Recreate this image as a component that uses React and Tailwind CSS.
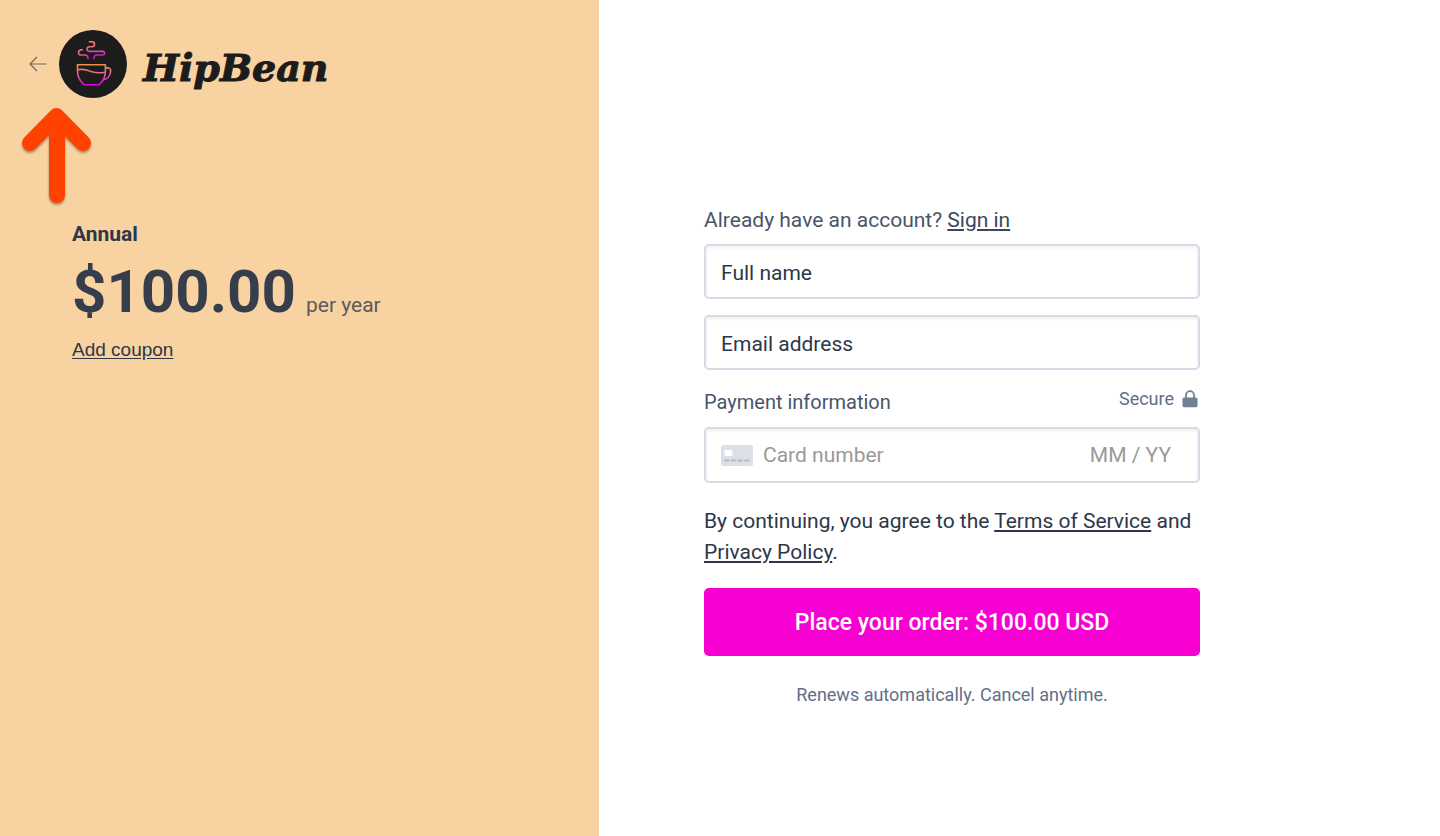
import React from "react";

function LogoMark() {
  return (
    <svg viewBox="0 0 68 68" className="w-[68px] h-[68px]" fill="none" aria-hidden="true">
      <defs>
        <linearGradient id="steam" gradientUnits="userSpaceOnUse" x1="0" y1="11" x2="0" y2="28">
          <stop offset="0" stopColor="#f09050" />
          <stop offset="0.45" stopColor="#e2608a" />
          <stop offset="0.8" stopColor="#d61fc8" />
          <stop offset="1" stopColor="#d800dc" />
        </linearGradient>
        <linearGradient id="steam-left" gradientUnits="userSpaceOnUse" x1="0" y1="19" x2="0" y2="29">
          <stop offset="0" stopColor="#f09050" />
          <stop offset="0.5" stopColor="#e2608a" />
          <stop offset="1" stopColor="#d800dc" />
        </linearGradient>
        <linearGradient id="cup" gradientUnits="userSpaceOnUse" x1="0" y1="34" x2="0" y2="55">
          <stop offset="0" stopColor="#ee9448" />
          <stop offset="0.5" stopColor="#e0609a" />
          <stop offset="1" stopColor="#e000e0" />
        </linearGradient>
      </defs>
      <circle cx="34" cy="34" r="34" fill="#1c1c1c" />
      <g strokeWidth="1.6" strokeLinecap="round">
        <path
          stroke="url(#steam)"
          d="M30.4 11.7h2.6a2.5 2.5 0 0 1 0 5h-2.6a2.3 2.3 0 0 0 0 4.7h13.4a1.8 1.8 0 0 1 0 3.6H38c-2.3 0-3.2 1.5-3.2 3.8"
        />
        <path
          stroke="url(#steam-left)"
          d="M23.2 19.7c-2.2 0-3.7 1.4-3.7 3 0 1.4 1 2.3 2.4 2.3h3.8c2.3 0 3.3 1.5 3.3 3.8"
        />
      </g>
      <g stroke="url(#cup)" strokeWidth="1.6" strokeLinejoin="round">
        <path d="M18.5 34.8h27.9v6.4c0 5.8-2.4 10.2-6.1 13.5H25.2c-4.3-3.3-6.7-8.2-6.7-13.9z" />
        <path d="M18.5 39.8c5.2-1.4 8.6.2 13.2 1.6 4.6 1.4 9 1.8 14.5.8" />
        <path d="M46.4 37.9h2.2c2 0 3.2 1.2 3.1 3.1-.2 4.7-3.4 8.2-7.7 8.8" />
      </g>
    </svg>
  );
}

function BackArrow() {
  return (
    <svg viewBox="0 0 18 16" className="w-[18px] h-4" fill="none" stroke="#6f665c" strokeWidth="1.2">
      <path d="M17.5 8H1M8 1 1 8l7 7" />
    </svg>
  );
}

function CardIcon() {
  return (
    <svg viewBox="0 0 32 21" className="w-8 h-[21px] shrink-0" aria-hidden="true">
      <rect width="32" height="21" rx="2.5" fill="#dcdfe7" />
      <rect x="3.5" y="5" width="8" height="6" rx="1" fill="#fff" />
      <path d="M3.5 15.5h25" stroke="#b5b9c6" strokeWidth="2" strokeDasharray="5 1.6" />
    </svg>
  );
}

function LockIcon() {
  return (
    <svg viewBox="0 0 16 18" className="w-4 h-[18px]" aria-hidden="true">
      <path d="M4 8.5V5.2a4 4 0 0 1 8 0v3.3" fill="none" stroke="#718096" strokeWidth="1.8" />
      <rect x="0.5" y="7.6" width="15" height="9.6" rx="1.6" fill="#718096" />
    </svg>
  );
}

function PlanPanel() {
  return (
    <aside className="w-[41.6%] bg-[#f8d2a0] relative">
      <header className="flex items-center pt-[30px] pl-[29px]">
        <a href="#back" aria-label="Back" className="mr-3">
          <BackArrow />
        </a>
        <LogoMark />
        <span className="ml-4 pt-2 font-['DejaVu_Serif',serif] font-bold italic text-[38px] leading-none text-[#1c1c1c] [-webkit-text-stroke:1px_#1c1c1c]">
          HipBean
        </span>
      </header>

      {/* Pointer to the back link */}
      <svg
        viewBox="0 0 80 108"
        className="absolute left-4 top-[102px] w-20 h-[108px] drop-shadow-[0_2px_1px_rgba(0,0,0,0.35)]"
        fill="none"
        stroke="#ff4200"
        strokeWidth="16"
        strokeLinecap="round"
        strokeLinejoin="round"
        aria-hidden="true"
      >
        <path d="M41 93V16" />
        <path d="M14 41l26.5-27L67 41" />
      </svg>

      <section className="mt-[120px] pl-[72px]">
        <h2 className="text-[21px] leading-8 font-bold text-[#2d3748]">Annual</h2>
        <p className="mt-3 flex items-baseline gap-[10px]">
          <span className="text-[60px] leading-[60px] font-bold text-[#363e4c]">$100.00</span>
          <span className="text-[21px] text-[#5b5a5c]">per year</span>
        </p>
        <a href="#coupon" className="inline-block mt-3 font-['Liberation_Sans',sans-serif] text-[19px] leading-8 text-[#2d3748] underline underline-offset-2">
          Add coupon
        </a>
      </section>
    </aside>
  );
}

const fieldClass =
  "rounded-[5px] border-2 border-[#d3dce7] bg-white shadow-[inset_0_2px_4px_rgba(0,0,0,0.06)]";

function TextField({ label, type }) {
  return (
    <input
      type={type}
      aria-label={label}
      placeholder={label}
      className={`${fieldClass} w-full h-[55px] px-[15px] pt-[2px] text-[21px] text-[#2d3748] placeholder:text-[#2d3748] placeholder:opacity-100`}
    />
  );
}

export default function App() {
  return (
    <div className="min-h-screen flex bg-white font-[Roboto,sans-serif]">
      <PlanPanel />
      <main className="flex-1 pt-[204px] px-[105px] pb-16">
        <form className="max-w-[496px]">
          <p className="text-[21px] leading-8 text-[#4a5568]">
            Already have an account?{" "}
            <a href="#signin" className="underline text-[#3c475a]">Sign in</a>
          </p>

          <div className="mt-2 flex flex-col gap-4">
            <TextField label="Full name" type="text" />
            <TextField label="Email address" type="email" />
          </div>

          <div className="mt-4 flex justify-between items-start text-[#4a5568]">
            <h3 className="text-[20px] leading-8">Payment information</h3>
            <span className="flex items-center gap-2 pr-[2px] text-[18px] leading-[26px] text-[#5f6f8a]">
              Secure <LockIcon />
            </span>
          </div>

          <div className={`${fieldClass} mt-[9px] h-14 px-[15px] flex items-center`}>
            <CardIcon />
            <input
              type="text"
              aria-label="Card number"
              placeholder="Card number"
              className="ml-[10px] pt-[2px] flex-1 min-w-0 text-[21px] placeholder:text-[#999] placeholder:opacity-100"
            />
            <input
              type="text"
              aria-label="Expiry date"
              placeholder="MM / YY"
              className="w-24 mr-3 pt-[2px] text-right text-[21px] placeholder:text-[#999] placeholder:opacity-100"
            />
          </div>

          <p className="mt-[23px] text-[21px] leading-[31px] text-[#2d3748]">
            By continuing, you agree to the{" "}
            <a href="#terms" className="underline">Terms of Service</a> and{" "}
            <a href="#privacy" className="underline">Privacy Policy</a>.
          </p>

          <button
            type="submit"
            className="mt-5 w-full h-[68px] pt-[2px] rounded-[5px] bg-[#f700d2] text-white text-[23px] font-medium"
          >
            Place your order: $100.00 USD
          </button>

          <p className="mt-[26px] text-center text-[18px] leading-[26px] text-[#5f6f8a]">
            Renews automatically. Cancel anytime.
          </p>
        </form>
      </main>
    </div>
  );
}
